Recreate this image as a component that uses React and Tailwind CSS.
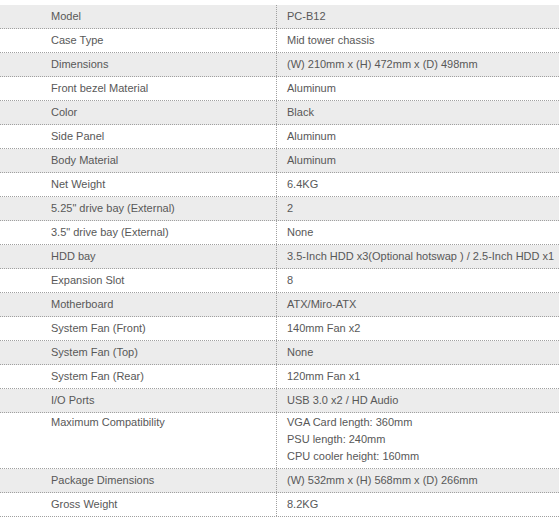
const specs = [
  ['Model', ['PC-B12']],
  ['Case Type', ['Mid tower chassis']],
  ['Dimensions', ['(W) 210mm x (H) 472mm x (D) 498mm']],
  ['Front bezel Material', ['Aluminum']],
  ['Color', ['Black']],
  ['Side Panel', ['Aluminum']],
  ['Body Material', ['Aluminum']],
  ['Net Weight', ['6.4KG']],
  ['5.25" drive bay (External)', ['2']],
  ['3.5" drive bay (External)', ['None']],
  ['HDD bay', ['3.5-Inch HDD x3(Optional hotswap ) / 2.5-Inch HDD x1']],
  ['Expansion Slot', ['8']],
  ['Motherboard', ['ATX/Miro-ATX']],
  ['System Fan (Front)', ['140mm Fan x2']],
  ['System Fan (Top)', ['None']],
  ['System Fan (Rear)', ['120mm Fan x1']],
  ['I/O Ports', ['USB 3.0 x2 / HD Audio']],
  ['Maximum Compatibility', ['VGA Card length: 360mm', 'PSU length: 240mm', 'CPU cooler height: 160mm']],
  ['Package Dimensions', ['(W) 532mm x (H) 568mm x (D) 266mm']],
  ['Gross Weight', ['8.2KG']],
];

export default function App() {
  return (
    <div className="w-[560px] h-[517px] bg-white pt-[5px] text-[11px] text-[#585858] font-['Liberation_Sans',Arial,sans-serif] overflow-hidden">
      <div className="w-[559px]">
        {specs.map(([label, values], i) => {
          const multi = values.length > 1;
          return (
            <div
              key={label}
              className={
                'grid grid-cols-[277px_1fr] border-b border-dotted border-[#a0a0a0] ' +
                (i % 2 === 0 ? 'bg-[#ececec]' : 'bg-white')
              }
            >
              <div
                className={
                  'border-r border-dotted border-[#a0a0a0] pl-[51px] ' +
                  (multi ? 'pt-[1px] leading-[17px]' : 'leading-[23px]')
                }
              >
                {label}
              </div>
              <div className={'pl-[10px] ' + (multi ? 'pt-[1px] pb-[3px] leading-[17px]' : 'leading-[23px]')}>
                {values.map((v) => (
                  <div key={v}>{v}</div>
                ))}
              </div>
            </div>
          );
        })}
      </div>
    </div>
  );
}
